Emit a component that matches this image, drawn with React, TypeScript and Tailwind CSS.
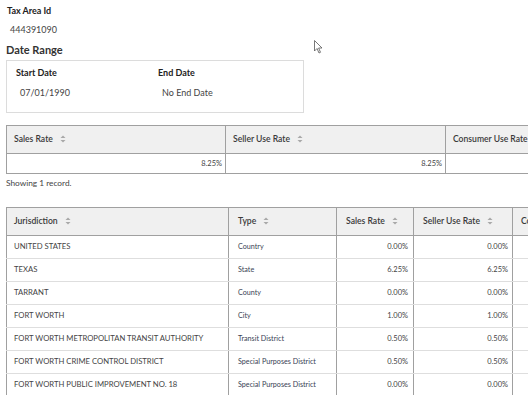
import React from 'react';

const FONT = { fontFamily: 'Lato, "Open Sans", sans-serif' };

function SortIcon() {
  return (
    <svg className="inline-block ml-[7px] align-[-1px]" width="6" height="8" viewBox="0 0 6 8">
      <path d="M3 0.5 L5.5 3 L0.5 3 Z" fill="#a8a8a8" />
      <path d="M3 7.5 L5.5 5 L0.5 5 Z" fill="#a8a8a8" />
    </svg>
  );
}

const rows = [
  { name: 'UNITED STATES', type: 'Country', sales: '0.00%', seller: '0.00%' },
  { name: 'TEXAS', type: 'State', sales: '6.25%', seller: '6.25%' },
  { name: 'TARRANT', type: 'County', sales: '0.00%', seller: '0.00%' },
  { name: 'FORT WORTH', type: 'City', sales: '1.00%', seller: '1.00%' },
  { name: 'FORT WORTH METROPOLITAN TRANSIT AUTHORITY', type: 'Transit District', sales: '0.50%', seller: '0.50%' },
  { name: 'FORT WORTH CRIME CONTROL DISTRICT', type: 'Special Purposes District', sales: '0.50%', seller: '0.50%' },
  { name: 'FORT WORTH PUBLIC IMPROVEMENT NO. 18', type: 'Special Purposes District', sales: '0.00%', seller: '0.00%' },
];

export default function App() {
  return (
    <div className="relative w-[528px] h-[395px] overflow-hidden bg-white text-[#333]" style={FONT}>
      {/* cursor */}
      <svg className="absolute left-[314px] top-[40px]" width="10" height="14" viewBox="0 0 10 14">
        <path d="M0.5 0.5 L0.5 11 L3 8.5 L5 13 L6.5 12.3 L4.6 8 L8 8 Z" fill="white" stroke="#555" strokeWidth="0.8" />
      </svg>

      <div className="pl-[7px] pt-[5px]">
        <div className="text-[9px] font-bold leading-[12px] text-[#222]">Tax Area Id</div>
        <div className="mt-[7px] pl-[3px] text-[9px] leading-[12px] text-[#444]">444391090</div>
        <div className="mt-[7px] -ml-[1px] text-[11px] font-bold leading-[14px] text-[#333]">Date Range</div>
      </div>

      <div className="ml-[6px] mt-[3px] w-[298px] h-[53px] border border-[#dcdcdc] bg-white">
        <div className="flex pt-[6px]">
          <div className="w-[141px] pl-[9px] text-[9px] font-bold leading-[12px] text-[#222]">Start Date</div>
          <div className="pl-[10px] text-[9px] font-bold leading-[12px] text-[#222]">End Date</div>
        </div>
        <div className="flex pt-[8px]">
          <div className="w-[141px] pl-[13px] text-[9px] leading-[12px] text-[#444]">07/01/1990</div>
          <div className="pl-[14px] text-[9px] leading-[12px] text-[#444]">No End Date</div>
        </div>
      </div>

      <table className="ml-[6px] mt-[12px] border-collapse table-fixed w-[660px] text-[8.6px]">
        <colgroup>
          <col className="w-[219px]" />
          <col className="w-[220px]" />
          <col className="w-[221px]" />
        </colgroup>
        <thead>
          <tr className="h-[28px] bg-[#f0f0f0]">
            <th className="border border-[#a0a0a0] pl-[7px] text-left font-semibold text-[#3a3a3a]">Sales Rate<SortIcon /></th>
            <th className="border border-[#a0a0a0] pl-[7px] text-left font-semibold text-[#3a3a3a]">Seller Use Rate<SortIcon /></th>
            <th className="border border-[#a0a0a0] pl-[7px] text-left font-semibold text-[#3a3a3a]">Consumer Use Rate</th>
          </tr>
        </thead>
        <tbody>
          <tr className="h-[20px] text-[7.5px] text-[#444]">
            <td className="border border-[#a0a0a0] pr-[3px] text-right">8.25%</td>
            <td className="border border-[#a0a0a0] pr-[3px] text-right">8.25%</td>
            <td className="border border-[#a0a0a0]"></td>
          </tr>
        </tbody>
      </table>
      <div className="pl-[6px] pt-[4px] text-[8.3px] leading-[10px] text-[#444]">Showing 1 record.</div>

      <table className="ml-[6px] mt-[19px] border-collapse table-fixed w-[620px]">
        <colgroup>
          <col className="w-[222px]" />
          <col className="w-[108px]" />
          <col className="w-[77px]" />
          <col className="w-[99px]" />
          <col className="w-[114px]" />
        </colgroup>
        <thead>
          <tr className="h-[28px] bg-[#f0f0f0] text-[8.6px] text-[#3a3a3a]">
            <th className="border border-[#a0a0a0] pl-[7px] text-left font-semibold">Jurisdiction<SortIcon /></th>
            <th className="border border-[#a0a0a0] pl-[9px] text-left font-semibold">Type<SortIcon /></th>
            <th className="border border-[#a0a0a0] pl-[9px] text-left font-semibold">Sales Rate<SortIcon /></th>
            <th className="border border-[#a0a0a0] pl-[9px] text-left font-semibold">Seller Use Rate<SortIcon /></th>
            <th className="border border-[#a0a0a0] pl-[8px] text-left font-semibold">Consumer Use Rate</th>
          </tr>
        </thead>
        <tbody>
          {rows.map((r) => (
            <tr key={r.name} className="h-[23px] text-[#444]">
              <td className="border-x border-[#a0a0a0] border-b border-b-[#dedede] pl-[7px] text-[7.7px]">{r.name}</td>
              <td className="border-x border-[#a0a0a0] border-b border-b-[#dedede] pl-[9px] text-[7.2px] text-[#3a3f55]">{r.type}</td>
              <td className="border-x border-[#a0a0a0] border-b border-b-[#dedede] pr-[5px] text-right text-[7.5px]">{r.sales}</td>
              <td className="border-x border-[#a0a0a0] border-b border-b-[#dedede] pr-[4px] text-right text-[7.5px]">{r.seller}</td>
              <td className="border-x border-[#a0a0a0] border-b border-b-[#dedede]"></td>
            </tr>
          ))}
        </tbody>
      </table>
    </div>
  );
}
